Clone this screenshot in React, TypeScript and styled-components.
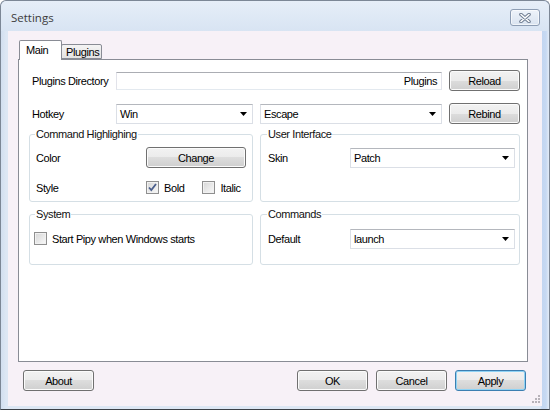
import React from 'react';
import styled, { createGlobalStyle } from 'styled-components';

const GlobalStyle = createGlobalStyle`
  html, body {
    margin: 0;
    padding: 0;
    background: #ffffff;
  }
  body {
    font-family: "Liberation Sans", Arial, sans-serif;
    font-size: 11px;
    color: #000;
  }
  * {
    box-sizing: border-box;
  }
`;

const Window = styled.div`
  width: 550px;
  height: 410px;
  display: flex;
  flex-direction: column;
  border: 1px solid #7c8796;
  border-bottom-color: #3b4047;
  border-radius: 6px 6px 0 0;
  background: linear-gradient(
    90deg,
    #d2dff0 0,
    #dde7f4 5px,
    #dde7f4 calc(100% - 9px),
    #c3d6f1 calc(100% - 7px),
    #c7d9f2 calc(100% - 3px),
    #e4ecf7 100%
  );
`;

const TitleBar = styled.div`
  height: 30px;
  display: flex;
  align-items: flex-start;
  justify-content: space-between;
  padding: 8px 9px 0 10px;
  border-radius: 6px 6px 0 0;
  background: linear-gradient(#e6eef8, #d8e4f3);
`;

const Title = styled.span`
  font-family: "Open Sans", "Noto Sans", sans-serif;
  font-size: 11.5px;
  line-height: 17px;
  color: #3c3c3c;
`;

const CloseButton = styled.div`
  width: 30px;
  height: 17px;
  display: flex;
  align-items: center;
  justify-content: center;
  border: 1px solid #8d9db4;
  border-radius: 3px;
  background: linear-gradient(#eef3fa, #d9e3f0);
  box-shadow: inset 0 0 0 1px rgba(255, 255, 255, 0.6);
`;

const Client = styled.div`
  flex: 1;
  margin: 0 7px 3px;
  background: #f7f1f7;
  padding: 9px 14px 0 10px;
  display: flex;
  flex-direction: column;
  position: relative;
`;

const TabStrip = styled.div`
  height: 19px;
  display: flex;
  align-items: flex-end;
  padding-left: 1px;
  position: relative;
  z-index: 1;
`;

const Tab = styled.div<{ $active?: boolean; $w: number }>`
  width: ${(p) => p.$w}px;
  height: ${(p) => (p.$active ? 20 : 15)}px;
  margin-bottom: ${(p) => (p.$active ? -1 : 0)}px;
  margin-left: ${(p) => (p.$active ? 0 : -1)}px;
  border: 1px solid #898c95;
  border-bottom: ${(p) => (p.$active ? 'none' : '1px solid #898c95')};
  border-radius: 2px 2px 0 0;
  background: ${(p) => (p.$active ? '#ffffff' : 'linear-gradient(#f4f4f4, #e3e3e3)')};
  padding: ${(p) => (p.$active ? '3px 0 0 6px' : '1px 0 0 4px')};
  line-height: 13px;
  letter-spacing: -0.4px;
  white-space: nowrap;
`;

const Panel = styled.div`
  flex: 1;
  background: #ffffff;
  border: 1px solid #898c95;
  padding: 10px 0 0 10px;
  display: flex;
  flex-direction: column;
`;

const Row = styled.div<{ $top?: number }>`
  display: flex;
  align-items: center;
  height: 21px;
  margin-left: 3px;
  margin-top: ${(p) => p.$top || 0}px;
  gap: 7px;
`;

const Label = styled.span<{ $w: number }>`
  width: ${(p) => p.$w}px;
  flex-shrink: 0;
  letter-spacing: -0.4px;
  white-space: nowrap;
`;

const FieldLabel = styled(Label)`
  margin-right: -7px;
`;

const TextBox = styled.div<{ $w: number }>`
  width: ${(p) => p.$w}px;
  height: 18px;
  border: 1px solid #e2e3ea;
  border-top-color: #abadb3;
  border-bottom-color: #e3e9ef;
  background: #ffffff;
  text-align: right;
  padding-right: 4px;
  line-height: 16px;
  letter-spacing: -0.4px;
`;

const Combo = styled.div<{ $w: number }>`
  width: ${(p) => p.$w}px;
  height: 20px;
  flex-shrink: 0;
  border: 1px solid #dbdfe6;
  border-top-color: #b4b7bd;
  background: #ffffff;
  display: flex;
  align-items: center;
  justify-content: space-between;
  padding: 0 5px 0 3px;
  letter-spacing: -0.4px;
`;

const Button = styled.div<{ $w?: number; $default?: boolean }>`
  width: ${(p) => p.$w || 71}px;
  height: 21px;
  flex-shrink: 0;
  display: flex;
  align-items: center;
  justify-content: center;
  border: 1px solid ${(p) => (p.$default ? '#3c7fb1' : '#707070')};
  border-radius: 3px;
  background: linear-gradient(#f2f2f2 0%, #ebebeb 50%, #dddddd 50%, #cfcfcf 100%);
  box-shadow: inset 0 0 0 1px ${(p) => (p.$default ? '#8fd3f5' : '#fbfbfb')};
  letter-spacing: -0.4px;
`;

const Groups = styled.div`
  margin-top: 3px;
  display: grid;
  grid-template-columns: 224px 260px;
  grid-template-rows: 75px 58px;
  column-gap: 7px;
  row-gap: 5px;
`;

const Group = styled.fieldset<{ $pl: number }>`
  margin: 0;
  min-width: 0;
  padding: 0 5px 0 ${(p) => p.$pl}px;
  border: 1px solid #d5dfe5;
  border-radius: 3px;
`;

const Legend = styled.legend`
  padding: 0 1px;
  margin-left: -1px;
  line-height: 14px;
  letter-spacing: -0.4px;
  color: #111;
`;

const GroupRow = styled.div<{ $top: number; $shift?: number }>`
  display: flex;
  align-items: center;
  height: 21px;
  margin-top: ${(p) => p.$top}px;
  margin-left: ${(p) => p.$shift || 0}px;
`;

const CheckGroup = styled.div`
  display: flex;
  align-items: center;
  gap: 18px;
`;

const CheckItem = styled.label`
  display: flex;
  align-items: center;
  gap: 5px;
  letter-spacing: -0.4px;
`;

const Box = styled.span`
  width: 13px;
  height: 13px;
  flex-shrink: 0;
  display: flex;
  align-items: center;
  justify-content: center;
  border: 1px solid #8f8f8f;
  background: linear-gradient(135deg, #d6d6d6, #f9f9f9);
  box-shadow: inset 0 0 0 1px #f1f1f1;
`;

const Footer = styled.div`
  height: 44px;
  display: flex;
  gap: 8px;
  padding: 8px 2px 0 5px;
`;

const Spacer = styled.div`
  flex: 1;
`;

const Grip = styled.div`
  position: absolute;
  right: 2px;
  bottom: 3px;
  width: 8px;
  height: 8px;
  display: flex;
`;

const Arrow = () => (
  <svg width="7" height="4" viewBox="0 0 7 4">
    <path d="M0 0h7L3.5 4z" fill="#000" />
  </svg>
);

const Select: React.FC<{ w: number; value: string }> = ({ w, value }) => (
  <Combo $w={w}>
    <span>{value}</span>
    <Arrow />
  </Combo>
);

const Check: React.FC<{ checked?: boolean; text: string }> = ({ checked, text }) => (
  <CheckItem>
    <Box>
      {checked && (
        <svg width="9" height="9" viewBox="0 0 9 9">
          <path d="M1 4.5l2.3 2.6L8 1" fill="none" stroke="#4a5e8c" strokeWidth="1.8" />
        </svg>
      )}
    </Box>
    <span>{text}</span>
  </CheckItem>
);

const App: React.FC = () => {
  return (
    <>
      <GlobalStyle />
      <Window>
        <TitleBar>
          <Title>Settings</Title>
          <CloseButton>
            <svg width="12" height="10" viewBox="0 0 12 10">
              <path d="M2 1.5L10 8.5M10 1.5L2 8.5" stroke="#6f7d92" strokeWidth="3.6" strokeLinecap="round" />
              <path d="M2 1.5L10 8.5M10 1.5L2 8.5" stroke="#ffffff" strokeWidth="1.6" strokeLinecap="round" />
            </svg>
          </CloseButton>
        </TitleBar>
        <Client>
          <TabStrip>
            <Tab $active $w={43}>Main</Tab>
            <Tab $w={41}>Plugins</Tab>
          </TabStrip>
          <Panel>
            <Row>
              <FieldLabel $w={84}>Plugins Directory</FieldLabel>
              <TextBox $w={326}>Plugins</TextBox>
              <Button>Reload</Button>
            </Row>
            <Row $top={12}>
              <FieldLabel $w={84}>Hotkey</FieldLabel>
              <Select w={137} value="Win" />
              <Select w={182} value="Escape" />
              <Button>Rebind</Button>
            </Row>
            <Groups>
              <Group $pl={6}>
                <Legend>Command Highlighing</Legend>
                <GroupRow $top={6}>
                  <Label $w={110}>Color</Label>
                  <Button $w={100}>Change</Button>
                </GroupRow>
                <GroupRow $top={9}>
                  <Label $w={110}>Style</Label>
                  <CheckGroup>
                    <Check checked text="Bold" />
                    <Check text="Italic" />
                  </CheckGroup>
                </GroupRow>
              </Group>
              <Group $pl={7}>
                <Legend>User Interface</Legend>
                <GroupRow $top={6}>
                  <Label $w={82}>Skin</Label>
                  <Select w={165} value="Patch" />
                </GroupRow>
              </Group>
              <Group $pl={6}>
                <Legend>System</Legend>
                <GroupRow $top={7} $shift={-2}>
                  <Check text="Start Pipy when Windows starts" />
                </GroupRow>
              </Group>
              <Group $pl={7}>
                <Legend>Commands</Legend>
                <GroupRow $top={7}>
                  <Label $w={82}>Default</Label>
                  <Select w={165} value="launch" />
                </GroupRow>
              </Group>
            </Groups>
          </Panel>
          <Footer>
            <Button>About</Button>
            <Spacer />
            <Button>OK</Button>
            <Button>Cancel</Button>
            <Button $default>Apply</Button>
          </Footer>
          <Grip>
            <svg width="8" height="8" viewBox="0 0 8 8">
              <g fill="#b7b2b9">
                <rect x="6" y="0" width="2" height="2" />
                <rect x="3" y="3" width="2" height="2" />
                <rect x="6" y="3" width="2" height="2" />
                <rect x="0" y="6" width="2" height="2" />
                <rect x="3" y="6" width="2" height="2" />
                <rect x="6" y="6" width="2" height="2" />
              </g>
            </svg>
          </Grip>
        </Client>
      </Window>
    </>
  );
};

export default App;
